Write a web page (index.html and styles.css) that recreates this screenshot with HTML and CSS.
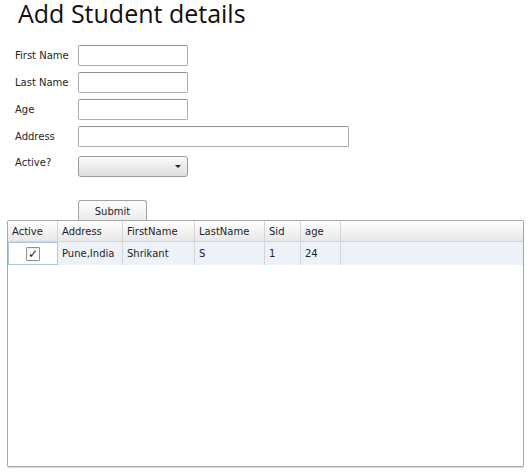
FILE: index.html
```html
<!DOCTYPE html>
<html lang="en">
<head>
    <meta charset="UTF-8">
    <title>Add Student details</title>
    <link rel="stylesheet" href="styles.css">
</head>
<body>
    <h1 class="title">Add Student details</h1>

    <form class="student-form">
        <label class="field-label">First Name</label>
        <input class="text-box short" type="text">

        <label class="field-label">Last Name</label>
        <input class="text-box short" type="text">

        <label class="field-label">Age</label>
        <input class="text-box short" type="text">

        <label class="field-label">Address</label>
        <input class="text-box long" type="text">

        <label class="field-label combo-label">Active?</label>
        <div class="combo-box">
            <span class="combo-arrow"></span>
        </div>
    </form>

    <div class="form-actions">
        <button class="submit-button" type="button">Submit</button>
    </div>

    <div class="data-grid">
        <div class="grid-row grid-header">
            <div class="cell col-active">Active</div>
            <div class="cell col-address">Address</div>
            <div class="cell col-first">FirstName</div>
            <div class="cell col-last">LastName</div>
            <div class="cell col-sid">Sid</div>
            <div class="cell col-age">age</div>
            <div class="cell col-fill"></div>
        </div>
        <div class="grid-row grid-data">
            <div class="cell col-active focused">
                <span class="check-box">&#10003;</span>
            </div>
            <div class="cell col-address">Pune,India</div>
            <div class="cell col-first">Shrikant</div>
            <div class="cell col-last">S</div>
            <div class="cell col-sid">1</div>
            <div class="cell col-age">24</div>
            <div class="cell col-fill"></div>
        </div>
    </div>
</body>
</html>
```

FILE: styles.css
```css
:root {
    --text: #1e1e1e;
    --box-border: #abadb3;
    --grid-line: #d5d5d5;
    --row-blue: #edf2f8;
}

* {
    margin: 0;
    padding: 0;
    box-sizing: border-box;
}

body {
    width: 531px;
    height: 472px;
    background: #ffffff;
    font-family: 'DejaVu Sans', sans-serif;
    font-size: 10px;
    color: var(--text);
    overflow: hidden;
}

.title {
    font-family: 'Open Sans', sans-serif;
    font-weight: 400;
    font-size: 25px;
    line-height: 26px;
    color: #111111;
    padding-left: 18px;
}

.student-form {
    display: grid;
    grid-template-columns: 63px auto;
    grid-auto-rows: 21px;
    row-gap: 6px;
    justify-items: start;
    align-items: center;
    margin-top: 19px;
    padding-left: 15px;
}

.field-label {
    line-height: 21px;
}

.combo-label {
    margin-top: 3px;
    align-self: start;
    line-height: 14px;
}

.text-box {
    height: 21px;
    border: 1px solid var(--box-border);
    border-top-color: #8f9197;
    border-radius: 2px;
    background: #ffffff;
    outline: none;
}

.text-box.short {
    width: 110px;
}

.text-box.long {
    width: 271px;
}

.combo-box {
    width: 110px;
    height: 21px;
    margin-top: 6px;
    border: 1px solid #9a9a9a;
    border-radius: 3px;
    background: linear-gradient(#fbfbfb, #ececec 50%, #dedede);
    display: flex;
    justify-content: flex-end;
    align-items: center;
    padding-right: 6px;
}

.combo-arrow {
    width: 0;
    height: 0;
    border-left: 3px solid transparent;
    border-right: 3px solid transparent;
    border-top: 3px solid #222222;
}

.form-actions {
    padding-left: 78px;
    margin-top: 26px;
    display: flex;
}

.submit-button {
    width: 69px;
    height: 20px;
    border: 1px solid #a3a3a3;
    border-bottom: none;
    border-radius: 3px 3px 0 0;
    background: linear-gradient(#fdfdfd, #ebebeb);
    font-family: 'DejaVu Sans', sans-serif;
    font-size: 10px;
    color: var(--text);
    padding-top: 1px;
}

.data-grid {
    margin-left: 7px;
    width: 517px;
    height: 247px;
    border: 1px solid #a8a8a8;
    border-radius: 2px;
    box-shadow: 0 1px 1px rgba(0, 0, 0, 0.15);
    background: #ffffff;
    overflow: hidden;
}

.grid-row {
    display: flex;
}

.grid-header {
    height: 21px;
    background: linear-gradient(#ffffff, #f3f3f3 50%, #e8e8e8);
    border-bottom: 1px solid var(--grid-line);
}

.grid-data {
    height: 23px;
    background: var(--row-blue);
}

.cell {
    flex: none;
    display: flex;
    align-items: center;
    padding-left: 4px;
    border-right: 1px solid var(--grid-line);
}

.grid-header .cell {
    padding-top: 1px;
}

.col-active { width: 50px; }
.col-address { width: 65px; }
.col-first { width: 72px; }
.col-last { width: 70px; }
.col-sid { width: 36px; }
.col-age { width: 40px; }

.col-fill {
    flex: 1;
    border-right: none;
}

.focused {
    background: #ffffff;
    border: 1px solid #a9cbe2;
    justify-content: center;
    padding-left: 0;
}

.check-box {
    width: 14px;
    height: 14px;
    border: 1px solid #8e8f8f;
    border-radius: 1px;
    background: linear-gradient(#f4f4f4, #ffffff);
    display: flex;
    justify-content: center;
    align-items: center;
    font-size: 12px;
    line-height: 1;
    color: #202020;
    font-weight: bold;
}
```
